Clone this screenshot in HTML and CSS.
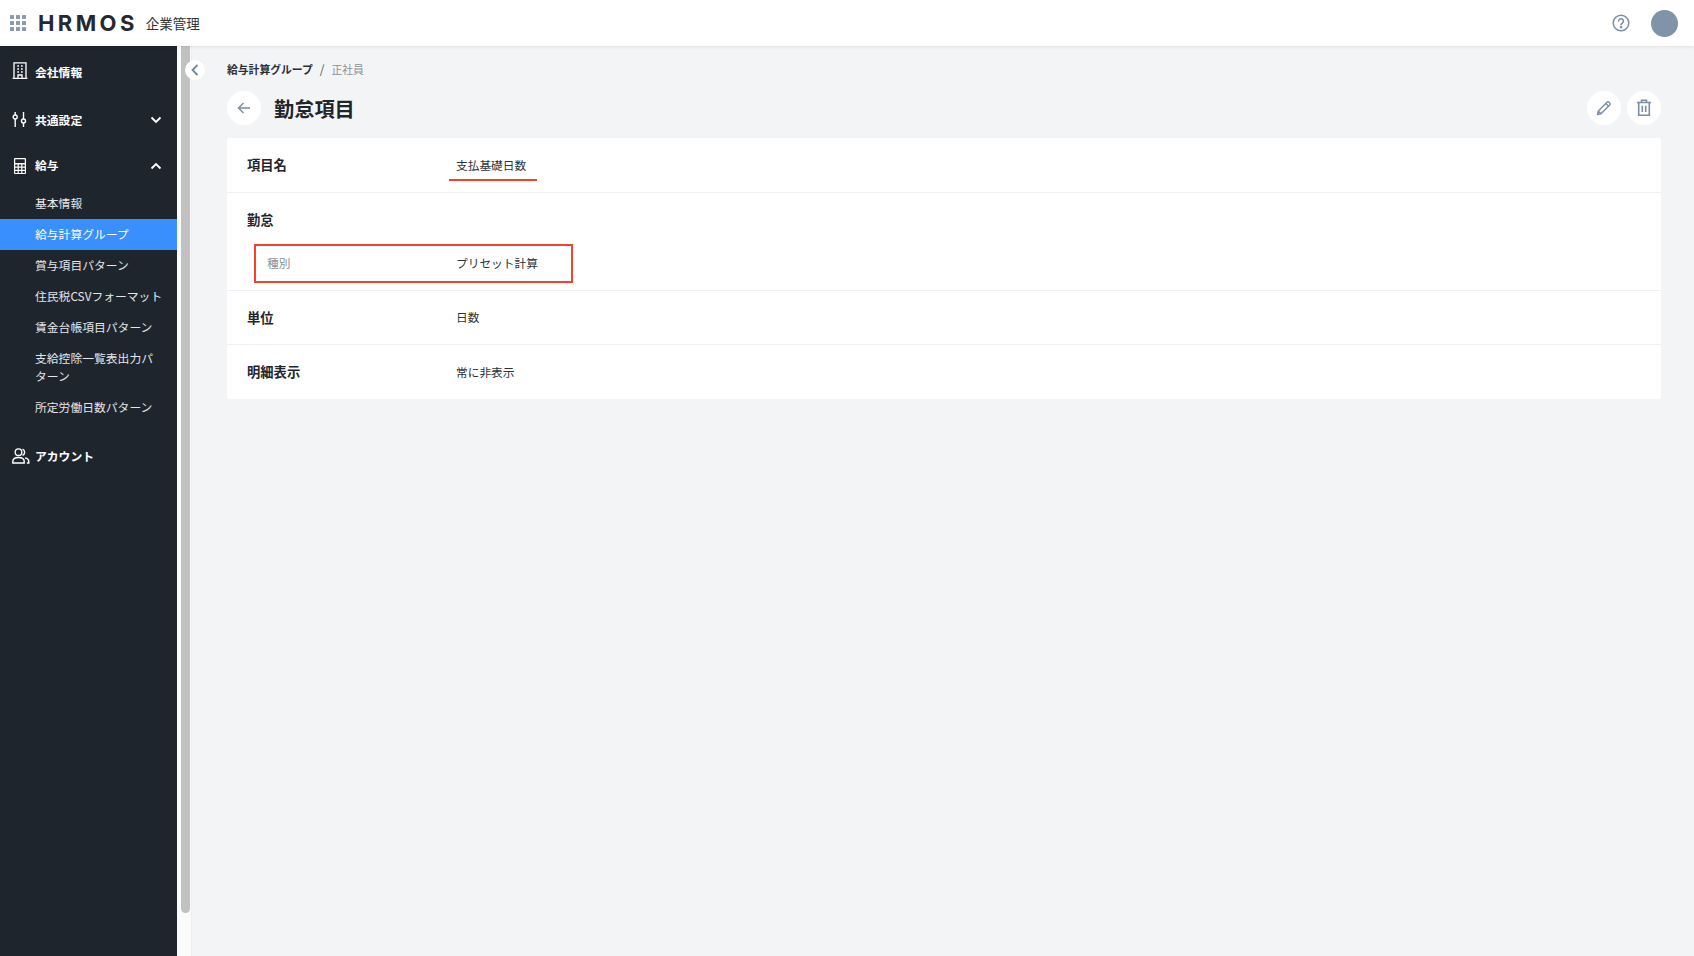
FILE: index.html
```html
<!DOCTYPE html>
<html lang="ja">
<head>
<meta charset="utf-8">
<title>勤怠項目</title>
<link rel="stylesheet" href="styles.css">
</head>
<body>
<header class="topbar">
  <div class="brand">
    <svg class="apps" width="16" height="16" viewBox="0 0 16 16"><g fill="#8a9bb0"><rect x="0" y="0" width="4" height="4" rx=".6"/><rect x="6" y="0" width="4" height="4" rx=".6"/><rect x="12" y="0" width="4" height="4" rx=".6"/><rect x="0" y="6" width="4" height="4" rx=".6"/><rect x="6" y="6" width="4" height="4" rx=".6"/><rect x="12" y="6" width="4" height="4" rx=".6"/><rect x="0" y="12" width="4" height="4" rx=".6"/><rect x="6" y="12" width="4" height="4" rx=".6"/><rect x="12" y="12" width="4" height="4" rx=".6"/></g></svg>
    <span class="logo">HRMOS</span>
    <span class="product">企業管理</span>
  </div>
  <div class="top-actions">
    <svg width="18" height="18" viewBox="0 0 18 18" fill="none" stroke="#7b8ea3" stroke-width="1.5"><circle cx="9" cy="9" r="7.8"/><path d="M6.6 7.1a2.4 2.4 0 1 1 3.7 2c-.9.6-1.3 1-1.3 1.9" stroke-linecap="round"/><circle cx="9" cy="13.3" r=".5" fill="#7b8ea3"/></svg>
    <span class="avatar"></span>
  </div>
</header>
<div class="shell">
  <nav class="sidebar">
    <a class="nav-head nav-first">
      <svg class="nav-icon icon-up" width="18" height="18" viewBox="0 0 18 18" fill="none" stroke="#fff" stroke-width="1.3"><path d="M2 16.300V.8h12v15.500M.6 16.300h14.800"/><path d="M5.300 4h1.700M9 4h1.700M5.300 7h1.700M9 7h1.700M5.300 10h1.700M9 10h1.700M6 16v-3h4v3"/></svg>
      <span class="nav-label">会社情報</span>
    </a>
    <a class="nav-head">
      <svg class="nav-icon" width="18" height="18" viewBox="0 0 18 18" fill="none" stroke="#fff" stroke-width="1.4"><circle cx="3.200" cy="6" r="2"/><path d="M3.200 1v3M3.200 8v8"/><circle cx="11.500" cy="10" r="2"/><path d="M11.500 1v7M11.500 12v4"/></svg>
      <span class="nav-label">共通設定</span>
      <svg class="chev" width="12" height="8" viewBox="0 0 12 8" fill="none" stroke="#fff" stroke-width="1.800"><path d="M1.500 1.500 6 6l4.500-4.500"/></svg>
    </a>
    <a class="nav-head nav-pay">
      <svg class="nav-icon" width="18" height="18" viewBox="0 0 18 18"><path fill="#fff" fill-rule="evenodd" d="M3 1h10a1 1 0 0 1 1 1v14a1 1 0 0 1-1 1H3a1 1 0 0 1-1-1V2a1 1 0 0 1 1-1Zm.2 1.200v3.800h9.600V2.200ZM3.200 7.500v2h2.400v-2Zm3.600 0v2h2.400v-2Zm3.600 0v2h2.400v-2ZM3.200 10.700v2h2.400v-2Zm3.600 0v2h2.400v-2Zm3.600 0v2h2.400v-2ZM3.200 13.900v2h2.400v-2Zm3.600 0v2h2.400v-2Zm3.600 0v2h2.400v-2Z"/></svg>
      <span class="nav-label">給与</span>
      <svg class="chev" width="12" height="8" viewBox="0 0 12 8" fill="none" stroke="#fff" stroke-width="1.800"><path d="M1.500 6.500 6 2l4.500 4.500"/></svg>
    </a>
    <ul class="subnav">
      <li>基本情報</li>
      <li class="active">給与計算グループ</li>
      <li>賞与項目パターン</li>
      <li>住民税CSVフォーマット</li>
      <li>賃金台帳項目パターン</li>
      <li>支給控除一覧表出力パターン</li>
      <li>所定労働日数パターン</li>
    </ul>
    <a class="nav-head nav-last">
      <svg class="nav-icon" width="18" height="16" viewBox="0 0 18 16" fill="none" stroke="#fff" stroke-width="1.400"><circle cx="6.500" cy="4.200" r="3.300"/><path d="M.8 15v-1.500c0-2.500 2-4 5.700-4s5.700 1.500 5.700 4V15ZM10.500 1.100a3.300 3.300 0 0 1 0 6.200M13 9.900c2.300.5 3.800 1.800 3.800 3.600V15h-2"/></svg>
      <span class="nav-label">アカウント</span>
    </a>
  </nav>
  <div class="rail">
    <div class="thumb"></div>
    <button class="collapse"><svg width="8" height="12" viewBox="0 0 8 12" fill="none" stroke="#6f86a0" stroke-width="1.800"><path d="M6.500 1 1.500 6l5 5"/></svg></button>
  </div>
  <main class="main">
    <div class="crumbs"><span class="crumb-link">給与計算グループ</span><span class="crumb-sep">/</span><span class="crumb-cur">正社員</span></div>
    <div class="title-row">
      <button class="round"><svg width="14" height="14" viewBox="0 0 14 14" fill="none" stroke="#7b8ea3" stroke-width="1.500"><path d="M13 7H1.500M6.500 2 1.500 7l5 5"/></svg></button>
      <h1 class="title">勤怠項目</h1>
      <div class="title-actions">
        <button class="round"><svg width="16" height="16" viewBox="0 0 16 16" fill="none" stroke="#7b8ea3" stroke-width="1.400" stroke-linejoin="round"><path d="M1.500 14.500 2.300 11 11 2.300a1.500 1.500 0 0 1 2.100 0l.6.6a1.500 1.500 0 0 1 0 2.100L5 13.700ZM9.800 3.500l2.700 2.700M2.300 11 5 13.700"/></svg></button>
        <button class="round"><svg class="trash" width="16" height="17" viewBox="0 0 16 17" fill="none" stroke="#7b8ea3" stroke-width="1.600"><path d="M1 3.500h14M5.500 3.300V1.200h5v2.100M2.700 3.500v12.700h10.600V3.500M6.300 6.800v6.200M9.700 6.800v6.200"/></svg></button>
      </div>
    </div>
    <section class="card">
      <div class="row row-name">
        <div class="label">項目名</div>
        <div class="value tabbed">支払基礎日数</div>
      </div>
      <div class="row row-group">
        <div class="label">勤怠</div>
        <div class="subrow">
          <div class="sublabel">種別</div>
          <div class="value">プリセット計算</div>
        </div>
      </div>
      <div class="row">
        <div class="label">単位</div>
        <div class="value">日数</div>
      </div>
      <div class="row">
        <div class="label">明細表示</div>
        <div class="value">常に非表示</div>
      </div>
    </section>
  </main>
</div>
</body>
</html>
```

FILE: styles.css
```css
* { box-sizing: border-box; }
html, body { margin: 0; height: 100%; overflow: hidden; }
body {
  font-family: "Noto Sans CJK JP", "Noto Sans", sans-serif;
  color: #1f2933;
  background: #f3f4f6;
  font-size: 12px;
}
.topbar {
  height: 46px;
  background: #fff;
  display: flex;
  align-items: center;
  justify-content: space-between;
  padding: 0 16px 0 10px;
  position: relative;
  z-index: 2;
  box-shadow: 0 1px 3px rgba(0,0,0,.08);
}
.brand { display: flex; align-items: center; }
.apps { margin-right: 12px; }
.logo {
  font-family: "Inter", sans-serif;
  font-weight: 700;
  font-size: 22px;
  letter-spacing: 3.400px;
  color: #25292e;
  line-height: 1;
}
.product { font-size: 13.500px; margin-left: 8px; color: #333; }
.top-actions { display: flex; align-items: center; gap: 21px; }
.avatar { width: 27px; height: 27px; border-radius: 50%; background: #8093a7; }
.shell { display: flex; height: 910px; }
.sidebar {
  width: 177px;
  flex: none;
  background: #1f252d;
  color: #fff;
  padding-top: 6px;
}
.nav-head {
  display: flex;
  align-items: center;
  height: 46px;
  padding-left: 12px;
  font-weight: 700;
}
.nav-first { height: 40px; margin-bottom: 5px; }
.nav-pay { height: 45px; }
.nav-last { margin-top: 10px; }
.nav-icon { flex: none; margin-right: 5px; }
.icon-up { margin-bottom: 3px; }
.nav-label { flex: 1; font-size: 11.800px; padding-bottom: 2px; }
.chev { margin-right: 15px; }
.subnav { list-style: none; margin: 0; padding: 0; }
.subnav li {
  padding: 5.500px 13px 7.500px 35px;
  line-height: 18px;
  font-size: 11.800px;
  color: #e4e7ea;
}
.subnav li.active { background: #3a8fff; color: #fff; }
.rail {
  width: 15px;
  flex: none;
  background: #fbfbfb;
  position: relative;
  border-right: 1px solid #eceef1;
}
.thumb {
  position: absolute;
  left: 4px;
  top: 0;
  width: 9px;
  height: 867px;
  background: #c1c1c1;
  border-radius: 0 0 5px 5px;
}
.collapse {
  position: absolute;
  left: 8px;
  top: 14px;
  width: 20px;
  height: 20px;
  border: 0;
  padding: 0;
  border-radius: 50%;
  background: #fff;
  display: flex;
  align-items: center;
  justify-content: center;
}
.main { flex: 1; padding: 15px 33px 0 35px; min-width: 0; }
.crumbs { display: flex; align-items: center; height: 16px; padding-bottom: 1px; font-size: 10.800px; }
.crumb-link { font-weight: 700; color: #2a2f35; }
.crumb-sep { margin: 0 7px; color: #555; font-size: 12px; }
.crumb-cur { color: #8c9197; }
.title-row { display: flex; align-items: center; margin-top: 14px; height: 34px; }
.round {
  width: 34px;
  height: 34px;
  border: 0;
  padding: 0;
  border-radius: 50%;
  background: #fff;
  display: flex;
  align-items: center;
  justify-content: center;
}
.trash { margin-bottom: 2px; }
.title { font-size: 20.200px; font-weight: 700; margin: 2px 0 0 13px; line-height: 1; color: #1f252d; }
.title-actions { margin-left: auto; display: flex; gap: 6px; }
.card {
  margin-top: 13px;
  background: #fff;
  border-radius: 3px;
}
.row {
  display: flex;
  align-items: center;
  height: 54px;
  padding-left: 20px;
  border-bottom: 1px solid #eef0f3;
}
.row:last-child { border-bottom: 0; }
.row-name { height: 55px; }
.row-group {
  display: block;
  height: 98px;
  padding-top: 16px;
}
.label { width: 209px; flex: none; font-size: 13.300px; font-weight: 700; line-height: 20px; color: #1f252d; }
.row-group .label { padding-top: 1px; }
.value { padding-bottom: 1px; font-size: 11.700px; color: #2c3238; line-height: 18px; }
.tabbed {
  position: relative;
  align-self: stretch;
  display: flex;
  align-items: center;
}
.tabbed::after {
  content: "";
  position: absolute;
  left: -7px;
  right: -11px;
  bottom: 11px;
  height: 2px;
  background: #f4432c;
}
.subrow {
  display: flex;
  align-items: center;
  width: 319px;
  height: 39px;
  margin: 14px 0 0 7px;
  border: 2px solid #f4432c;
}
.sublabel { width: 200px; flex: none; padding-left: 11px; padding-right: 1px; padding-bottom: 2px; color: #8c9197; font-size: 11.700px; }
```
